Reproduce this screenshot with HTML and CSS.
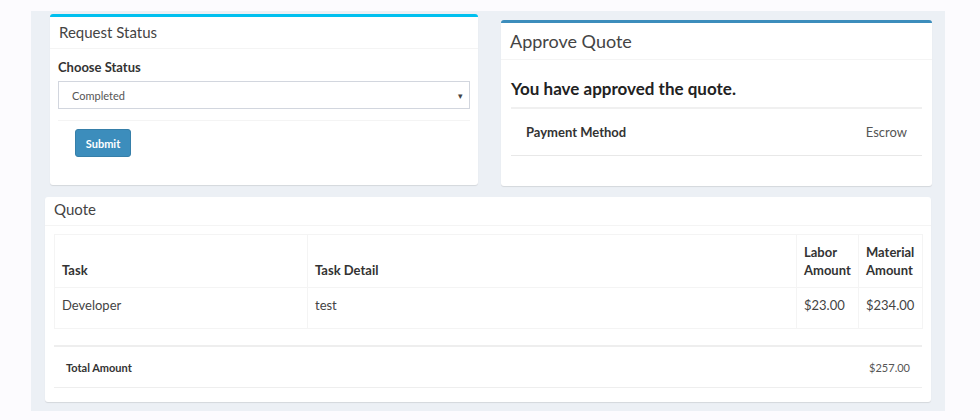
FILE: index.html
```html
<!DOCTYPE html>
<html lang="en">
<head>
    <meta charset="UTF-8">
    <title>Quote</title>
    <link rel="stylesheet" href="styles.css">
</head>
<body>

    <div class="content">
        <div class="top-row">
            <div class="box box-info status-box">
                <div class="box-header">
                    <h3 class="box-title">Request Status</h3>
                </div>
                <div class="box-body">
                    <label class="form-label">Choose Status</label>
                    <div class="select-wrap">
                        <span>Completed</span>
                        <span class="caret">&#9662;</span>
                    </div>
                    <div class="box-footer">
                        <button class="btn-primary">Submit</button>
                    </div>
                </div>
            </div>

            <div class="box box-primary approve-box">
                <div class="box-header">
                    <h3 class="box-title big">Approve Quote</h3>
                </div>
                <div class="box-body">
                    <h4 class="approved">You have approved the quote.</h4>
                    <table class="info-table">
                        <tr>
                            <th>Payment Method</th>
                            <td>Escrow</td>
                        </tr>
                    </table>
                </div>
            </div>
        </div>

        <div class="box quote-box">
            <div class="box-header">
                <h3 class="box-title">Quote</h3>
            </div>
            <div class="box-body">
                <table class="table-bordered">
                    <thead>
                        <tr>
                            <th class="col-task">Task</th>
                            <th class="col-detail">Task Detail</th>
                            <th class="col-labor">Labor Amount</th>
                            <th class="col-material">Material Amount</th>
                        </tr>
                    </thead>
                    <tbody>
                        <tr>
                            <td>Developer</td>
                            <td>test</td>
                            <td>$23.00</td>
                            <td>$234.00</td>
                        </tr>
                    </tbody>
                </table>
                <table class="total-table">
                    <tr>
                        <th>Total Amount</th>
                        <td>$257.00</td>
                    </tr>
                </table>
            </div>
        </div>
    </div>

</body>
</html>
```

FILE: styles.css
```css
body {
    margin: 0;
    background-color: #fcfbfe;
    font-family: Lato, "Open Sans", sans-serif;
    color: #333;
}
.content {
    margin: 11px 35px 0 31px;
    height: 400px;
    background-color: #ecf0f5;
    overflow: hidden;
}
.top-row {
    display: flex;
    align-items: flex-start;
}
.box {
    background-color: #fff;
    border-radius: 3px;
    border-top: 3px solid #d2d6de;
    box-shadow: 0 1px 1px rgba(0, 0, 0, 0.1);
    box-sizing: border-box;
}
.box-info {
    border-top-color: #00c0ef;
}
.box-primary {
    border-top-color: #3c8dbc;
}
.box-header {
    border-bottom: 1px solid #f4f4f4;
    padding: 0 9px;
    display: flex;
    align-items: center;
}
.box-title {
    margin: 0;
    font-size: 15px;
    font-weight: normal;
    color: #444;
}
.box-title.big {
    font-size: 18px;
}

/* request status */
.status-box {
    width: 428px;
    height: 171px;
    margin: 3px 0 0 19px;
}
.status-box .box-header {
    height: 30px;
    padding-bottom: 1px;
}
.status-box .box-body {
    padding: 10px 8px 0 8px;
}
.form-label {
    display: block;
    font-size: 13px;
    font-weight: bold;
    color: #333;
    margin-bottom: 6px;
}
.select-wrap {
    height: 26px;
    border: 1px solid #d2d6de;
    display: flex;
    justify-content: space-between;
    align-items: center;
    padding: 0 6px 0 13px;
    font-size: 11px;
    color: #555;
}
.caret {
    font-size: 9px;
    color: #444;
}
.box-footer {
    margin-top: 11px;
    border-top: 1px solid #f4f4f4;
    padding: 8px 17px;
}
.btn-primary {
    background-color: #3c8dbc;
    border: 1px solid #367fa9;
    border-radius: 3px;
    color: #fff;
    font-family: inherit;
    font-size: 11px;
    font-weight: bold;
    width: 56px;
    height: 28px;
    padding: 0;
}

/* approve quote */
.approve-box {
    width: 431px;
    height: 166px;
    margin: 9px 0 0 23px;
}
.approve-box .box-header {
    height: 36px;
}
.approve-box .box-body {
    padding: 0 10px;
}
.approved {
    margin: 0;
    height: 47px;
    line-height: 58px;
    font-size: 17px;
    font-weight: bold;
    color: #222;
    border-bottom: 2px solid #f0f0f0;
}
.info-table {
    width: 100%;
    border-collapse: collapse;
    font-size: 13px;
}
.info-table th,
.info-table td {
    height: 46px;
    padding: 0 15px;
    border-bottom: 1px solid #e8e8e8;
}
.info-table th {
    text-align: left;
    color: #333;
}
.info-table td {
    text-align: right;
    color: #555;
}

/* quote */
.quote-box {
    width: 886px;
    height: 205px;
    margin: 11px 0 0 14px;
    border-top: none;
}
.quote-box .box-header {
    height: 29px;
    align-items: flex-start;
    padding-top: 3px;
    box-sizing: border-box;
}
.quote-box .box-body {
    padding: 8px 9px 0 9px;
}
.table-bordered {
    width: 100%;
    border-collapse: collapse;
    font-size: 13px;
    table-layout: fixed;
}
.table-bordered th,
.table-bordered td {
    border: 1px solid #f4f4f4;
    padding: 8px 7px;
    line-height: 18px;
    text-align: left;
    box-sizing: border-box;
}
.table-bordered th {
    vertical-align: bottom;
    color: #333;
}
.table-bordered td {
    vertical-align: top;
    height: 41px;
    color: #444;
}
.col-task { width: 253px; }
.col-detail { width: 489px; }
.col-labor { width: 62px; }
.col-material { width: 64px; }
.total-table {
    width: 100%;
    margin-top: 16px;
    border-collapse: collapse;
    font-size: 11px;
    border-top: 2px solid #eee;
}
.total-table th,
.total-table td {
    height: 40px;
    padding: 0 12px;
    border-bottom: 1px solid #eee;
}
.total-table th {
    text-align: left;
    color: #333;
}
.total-table td {
    text-align: right;
    color: #555;
}
```
